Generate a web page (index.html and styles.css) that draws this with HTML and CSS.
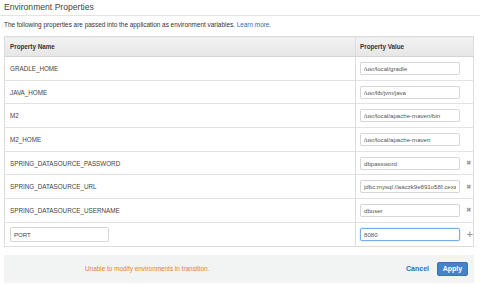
FILE: index.html
```html
<!DOCTYPE html>
<html lang="en">
<head>
    <meta charset="UTF-8">
    <title>Environment Properties</title>
    <link rel="stylesheet" href="styles.css">
</head>
<body>
    <div class="panel">
        <h2 class="title">Environment Properties</h2>
        <p class="intro">The following properties are passed into the application as environment variables. <a href="#">Learn more.</a></p>

        <table class="props">
            <thead>
                <tr>
                    <th class="col-name">Property Name</th>
                    <th class="col-value">Property Value</th>
                    <th class="col-action"></th>
                </tr>
            </thead>
            <tbody>
                <tr>
                    <td>GRADLE_HOME</td>
                    <td><input type="text" value="/usr/local/gradle"></td>
                    <td></td>
                </tr>
                <tr>
                    <td>JAVA_HOME</td>
                    <td><input type="text" value="/usr/lib/jvm/java"></td>
                    <td></td>
                </tr>
                <tr>
                    <td>M2</td>
                    <td><input type="text" value="/usr/local/apache-maven/bin"></td>
                    <td></td>
                </tr>
                <tr>
                    <td>M2_HOME</td>
                    <td><input type="text" value="/usr/local/apache-maven"></td>
                    <td></td>
                </tr>
                <tr>
                    <td>SPRING_DATASOURCE_PASSWORD</td>
                    <td><input type="text" value="dbpassword"></td>
                    <td><span class="remove">&#x2716;</span></td>
                </tr>
                <tr>
                    <td>SPRING_DATASOURCE_URL</td>
                    <td><input type="text" value="jdbc:mysql://aaczk9e891o58f.cexample.us-east-1.rds.amazonaws.com:3306/ebdb"></td>
                    <td><span class="remove">&#x2716;</span></td>
                </tr>
                <tr>
                    <td>SPRING_DATASOURCE_USERNAME</td>
                    <td><input type="text" value="dbuser"></td>
                    <td><span class="remove">&#x2716;</span></td>
                </tr>
                <tr>
                    <td><input type="text" class="name-input" value="PORT"></td>
                    <td><input type="text" class="focused" value="8080"></td>
                    <td><span class="add">+</span></td>
                </tr>
            </tbody>
        </table>

        <div class="footer">
            <span class="warning">Unable to modify environments in transition.</span>
            <div class="actions">
                <a href="#" class="cancel">Cancel</a>
                <button class="apply">Apply</button>
            </div>
        </div>
    </div>
</body>
</html>
```

FILE: styles.css
```css
body {
    margin: 0;
    padding: 0;
    background: #ffffff;
    font-family: "Liberation Sans", Arial, sans-serif;
    color: #333333;
}
.panel {
    width: 480px;
    height: 285px;
    overflow: hidden;
}
.title {
    margin: 0;
    padding: 2px 4px 3px 4px;
    font-size: 8.6px;
    font-weight: normal;
    color: #444444;
    line-height: 10px;
    border-bottom: 1px solid #e4e4e4;
}
.intro {
    margin: 0;
    padding: 4px 4px 0 4px;
    height: 16px;
    font-size: 6.4px;
    line-height: 9px;
    color: #333333;
}
.intro a {
    color: #2f6db5;
    text-decoration: none;
}
.props {
    margin: 0 6px 0 4px;
    width: 470px;
    table-layout: fixed;
    border-collapse: collapse;
    border: 1px solid #dddddd;
}
.props th {
    height: 19px;
    padding: 0 5px;
    text-align: left;
    font-size: 6.3px;
    font-weight: bold;
    color: #333333;
    background: linear-gradient(#f2f2f2, #e6e6e6);
    border-bottom: 1px solid #d4d4d4;
}
.props th.col-name {
    width: 340px;
}
.props th.col-value {
    border-left: 1px solid #dddddd;
    width: 101px;
    padding-left: 4px;
}
.props th.col-action {
    padding: 0;
}
.props td {
    height: 22.7px;
    padding: 0 5px;
    font-size: 6.3px;
    color: #444444;
    border-top: 1px solid #e2e2e2;
}
.props td:nth-child(2) {
    border-left: 1px solid #dddddd;
    padding: 0 0 0 4px;
}
.props td:nth-child(3) {
    padding: 0;
    text-align: left;
}
.props input {
    box-sizing: border-box;
    width: 100px;
    height: 13px;
    padding: 0 3px;
    border: 1px solid #d6d6d6;
    border-radius: 2px;
    font-family: "Liberation Sans", Arial, sans-serif;
    font-size: 6.1px;
    color: #555555;
    background: #ffffff;
    display: block;
}
.props input.name-input {
    width: 99px;
    height: 15px;
    color: #444444;
}
.props input.focused {
    border-color: #78aee8;
    box-shadow: 0 0 2px #a8cdf2;
}
.remove {
    font-family: "DejaVu Sans", sans-serif;
    font-size: 6.5px;
    color: #9a9a9a;
}
.add {
    font-family: "DejaVu Sans", sans-serif;
    font-size: 9px;
    font-weight: bold;
    color: #9a9a9a;
    line-height: 10px;
}
.footer {
    margin: 8px 6px 0 4px;
    height: 28px;
    background: #f2f3f3;
    display: flex;
    align-items: center;
    padding: 0 6px 0 81px;
}
.warning {
    flex: 1;
    font-size: 6.4px;
    color: #e7822a;
}
.actions {
    display: flex;
    align-items: center;
    gap: 8px;
}
.cancel {
    font-size: 7px;
    font-weight: bold;
    color: #2f6db5;
    text-decoration: none;
}
.apply {
    width: 31px;
    height: 14px;
    padding: 0;
    border: 1px solid #3a72b5;
    border-radius: 2px;
    background: #4582c8;
    color: #ffffff;
    font-family: "Liberation Sans", Arial, sans-serif;
    font-size: 7px;
    font-weight: bold;
}
```
